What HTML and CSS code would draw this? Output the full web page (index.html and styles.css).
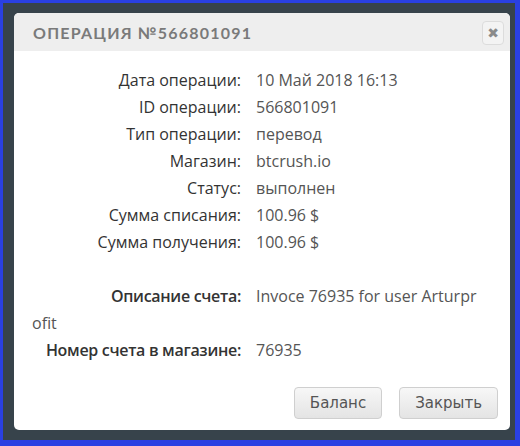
FILE: index.html
```html
<!DOCTYPE html>
<html lang="ru">
<head>
  <meta charset="UTF-8" />
  <title>Операция</title>
  <link rel="stylesheet" href="styles.css">
</head>
<body>
  <div class="frame">
    <div class="modal">
      <div class="modal-header">
        <h3>ОПЕРАЦИЯ №566801091</h3>
        <span class="close-btn">&#10006;</span>
      </div>

      <div class="modal-body">
        <div class="row"><span class="label">Дата операции:</span><span class="value">10 Май 2018 16:13</span></div>
        <div class="row"><span class="label">ID операции:</span><span class="value">566801091</span></div>
        <div class="row"><span class="label">Тип операции:</span><span class="value">перевод</span></div>
        <div class="row"><span class="label">Магазин:</span><span class="value">btcrush.io</span></div>
        <div class="row"><span class="label">Статус:</span><span class="value">выполнен</span></div>
        <div class="row"><span class="label">Сумма списания:</span><span class="value">100.96 $</span></div>
        <div class="row"><span class="label">Сумма получения:</span><span class="value">100.96 $</span></div>
        <div class="row empty"></div>
        <div class="row wrap"><span class="label strong">Описание счета:</span><span class="value">Invoce 76935 for user Arturprofit</span></div>
        <div class="row"><span class="label strong">Номер счета в магазине:</span><span class="value">76935</span></div>
      </div>

      <div class="modal-footer">
        <button type="button">Баланс</button>
        <button type="button">Закрыть</button>
      </div>
    </div>
  </div>
</body>
</html>
```

FILE: styles.css
```css
body {
  margin: 0;
  font-family: "Open Sans", Arial, sans-serif;
}

.frame {
  width: 520px;
  height: 446px;
  box-sizing: border-box;
  background: #37434b;
  border-style: solid;
  border-color: #2a40e2;
  border-width: 3px 5px 6px 3px;
  padding: 10px 5px 10px 11px;
}

.modal {
  height: 100%;
  background: white;
  border-radius: 5px;
  overflow: hidden;
  display: flex;
  flex-direction: column;
}

.modal-header {
  height: 38px;
  background: #eeeeee;
  display: flex;
  align-items: center;
  justify-content: space-between;
  padding: 0 6px 0 19px;
}

.modal-header h3 {
  margin: 0;
  font-family: "Lato", sans-serif;
  font-weight: 700;
  font-size: 16px;
  letter-spacing: 1.2px;
  color: #7a7a7a;
}

.close-btn {
  width: 20px;
  height: 22px;
  border: 1px solid #dcdcdc;
  border-radius: 4px;
  background: #f3f3f3;
  color: #8a8a8a;
  font-family: "DejaVu Sans", sans-serif;
  font-size: 14px;
  display: flex;
  align-items: center;
  justify-content: center;
  margin-top: 2px;
}

.modal-body {
  padding: 16px 27px 0 18px;
  font-size: 16px;
  line-height: 27px;
}

.row {
  color: #555;
}

.row.wrap {
  word-break: break-all;
}

.row.empty {
  height: 27px;
}

.label {
  display: inline-block;
  width: 209px;
  text-align: right;
  margin-right: 15px;
  color: #333;
  word-break: normal;
}

.label.strong {
  font-weight: 600;
  letter-spacing: -0.3px;
}

.modal-footer {
  margin-top: auto;
  display: flex;
  justify-content: flex-end;
  gap: 17px;
  padding: 0 12px 11px 0;
}

button {
  height: 32px;
  padding: 0 15px;
  font-family: "DejaVu Sans", sans-serif;
  font-size: 15px;
  color: #555;
  background: linear-gradient(#f7f7f7, #e4e4e4);
  border: 1px solid #cfcfcf;
  border-radius: 4px;
}
```
